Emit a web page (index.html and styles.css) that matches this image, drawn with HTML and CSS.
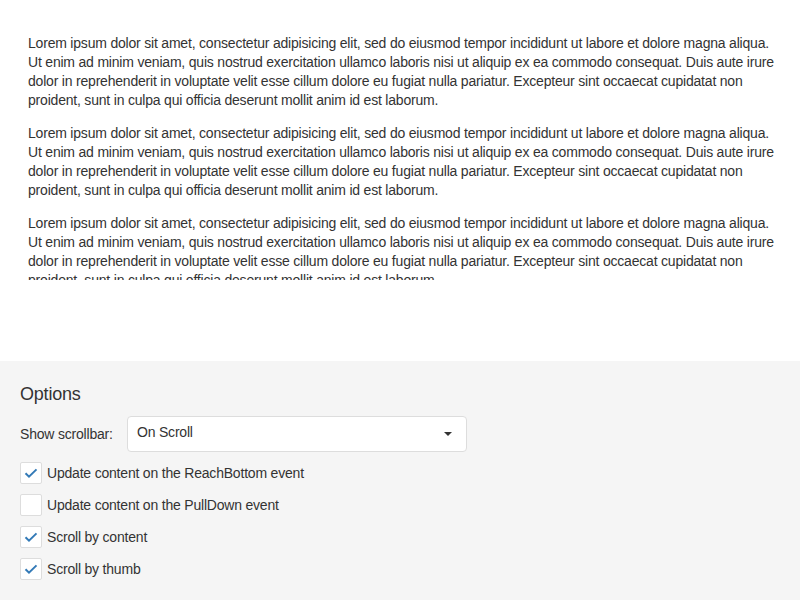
FILE: index.html
```html
<!DOCTYPE html>
<html>
<head>
<meta charset="utf-8">
<link rel="stylesheet" href="styles.css">
</head>
<body>
<div class="demo">
  <div class="scrollview">
    <p>Lorem ipsum dolor sit amet, consectetur adipisicing elit, sed do eiusmod tempor incididunt ut labore et dolore magna aliqua. Ut enim ad minim veniam, quis nostrud exercitation ullamco laboris nisi ut aliquip ex ea commodo consequat. Duis aute irure dolor in reprehenderit in voluptate velit esse cillum dolore eu fugiat nulla pariatur. Excepteur sint occaecat cupidatat non proident, sunt in culpa qui officia deserunt mollit anim id est laborum.</p>
    <p>Lorem ipsum dolor sit amet, consectetur adipisicing elit, sed do eiusmod tempor incididunt ut labore et dolore magna aliqua. Ut enim ad minim veniam, quis nostrud exercitation ullamco laboris nisi ut aliquip ex ea commodo consequat. Duis aute irure dolor in reprehenderit in voluptate velit esse cillum dolore eu fugiat nulla pariatur. Excepteur sint occaecat cupidatat non proident, sunt in culpa qui officia deserunt mollit anim id est laborum.</p>
    <p>Lorem ipsum dolor sit amet, consectetur adipisicing elit, sed do eiusmod tempor incididunt ut labore et dolore magna aliqua. Ut enim ad minim veniam, quis nostrud exercitation ullamco laboris nisi ut aliquip ex ea commodo consequat. Duis aute irure dolor in reprehenderit in voluptate velit esse cillum dolore eu fugiat nulla pariatur. Excepteur sint occaecat cupidatat non proident, sunt in culpa qui officia deserunt mollit anim id est laborum.</p>
    <p>Lorem ipsum dolor sit amet, consectetur adipisicing elit, sed do eiusmod tempor incididunt ut labore et dolore magna aliqua. Ut enim ad minim veniam, quis nostrud exercitation ullamco laboris nisi ut aliquip ex ea commodo consequat.</p>
  </div>
</div>
<div class="options">
  <div class="caption">Options</div>
  <div class="option-row">
    <span class="label">Show scrollbar:</span>
    <div class="select">
      <span class="select-value">On Scroll</span>
      <span class="caret"></span>
    </div>
  </div>
  <div class="checks">
    <div class="check-row"><span class="box"><svg width="22" height="22" viewBox="0 0 22 22"><path d="M5.5 11.2 L9 14.6 L16.5 7.4" fill="none" stroke="#337ab7" stroke-width="2"/></svg></span><span class="check-text">Update content on the ReachBottom event</span></div>
    <div class="check-row"><span class="box"></span><span class="check-text">Update content on the PullDown event</span></div>
    <div class="check-row"><span class="box"><svg width="22" height="22" viewBox="0 0 22 22"><path d="M5.5 11.2 L9 14.6 L16.5 7.4" fill="none" stroke="#337ab7" stroke-width="2"/></svg></span><span class="check-text">Scroll by content</span></div>
    <div class="check-row"><span class="box"><svg width="22" height="22" viewBox="0 0 22 22"><path d="M5.5 11.2 L9 14.6 L16.5 7.4" fill="none" stroke="#337ab7" stroke-width="2"/></svg></span><span class="check-text">Scroll by thumb</span></div>
  </div>
</div>
</body>
</html>
```
FILE: styles.css
```css
html, body {
  margin: 0;
  padding: 0;
  background: #fff;
  font-family: "Liberation Sans", Arial, sans-serif;
  font-size: 14px;
  letter-spacing: -0.2px;
  color: #333;
}
.demo {
  padding: 20px 20px 0 20px;
  height: 361px;
  box-sizing: border-box;
}
.scrollview {
  height: 260px;
  overflow: hidden;
  padding: 0 0 0 8px;
}
.scrollview p {
  margin: 14px 0;
  line-height: 19px;
}
.options {
  background: #f5f5f5;
  padding: 21px 20px 20px 20px;
  height: 239px;
  box-sizing: border-box;
}
.caption {
  font-size: 18px;
  line-height: 24px;
  color: #333;
}
.option-row {
  display: flex;
  align-items: center;
  margin-top: 10px;
}
.label {
  width: 107px;
  line-height: 19px;
}
.select {
  width: 340px;
  height: 36px;
  box-sizing: border-box;
  background: #fff;
  border: 1px solid #ddd;
  border-radius: 4px;
  display: flex;
  align-items: center;
  justify-content: space-between;
  padding: 0 14px 0 9px;
}
.select-value {
  line-height: 19px;
  margin-top: -3px;
}
.caret {
  width: 0;
  height: 0;
  border-left: 4px solid transparent;
  border-right: 4px solid transparent;
  border-top: 4px solid #333;
}
.checks {
  margin-top: 10px;
  display: flex;
  flex-direction: column;
  gap: 10px;
}
.check-row {
  display: flex;
  align-items: center;
  height: 22px;
}
.box {
  width: 22px;
  height: 22px;
  box-sizing: border-box;
  border: 1px solid #ddd;
  border-radius: 2px;
  background: #fff;
  position: relative;
  margin-right: 5px;
}
.box svg {
  position: absolute;
  left: -1px;
  top: -1px;
}
.check-text {
  line-height: 19px;
}
```
